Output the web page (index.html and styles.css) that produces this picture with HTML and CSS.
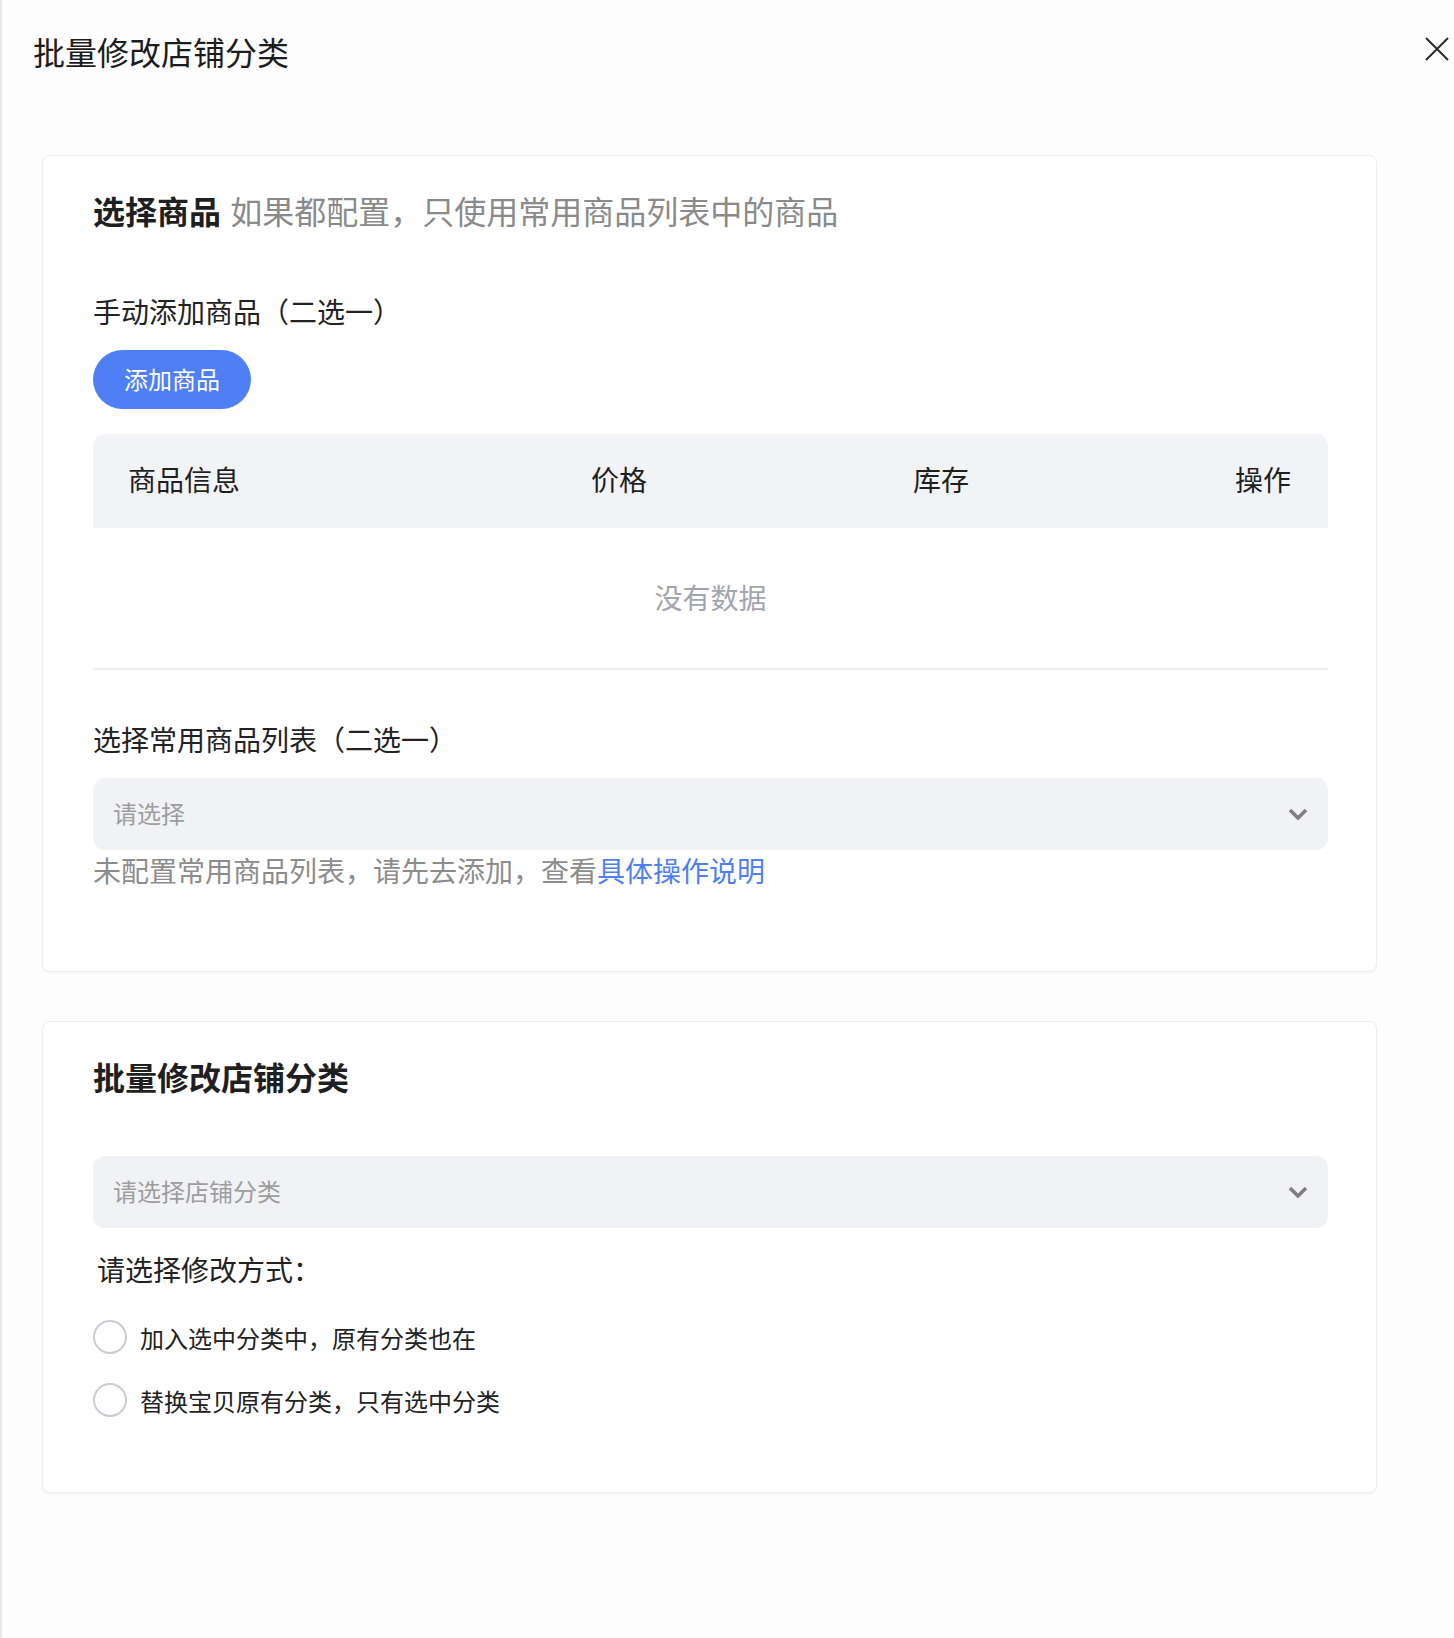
FILE: index.html
```html
<!DOCTYPE html>
<html lang="zh-CN">
<head>
  <meta charset="UTF-8" />
  <meta name="viewport" content="width=device-width, initial-scale=1.0"/>
  <title>批量修改店铺分类</title>
  <link rel="stylesheet" href="styles.css">
</head>
<body>

  <div class="drawer">
    <div class="drawer-header">
      <h1 class="drawer-title">批量修改店铺分类</h1>
      <button class="close-btn" aria-label="关闭">
        <svg width="24" height="24" viewBox="0 0 24 24">
          <path d="M1 1 L23 23 M23 1 L1 23" stroke="#2b2b2b" stroke-width="2" fill="none"/>
        </svg>
      </button>
    </div>

    <!-- 选择商品 -->
    <div class="card card-goods">
      <div class="card-title">
        选择商品 <span class="card-sub">如果都配置，只使用常用商品列表中的商品</span>
      </div>

      <div class="label label-manual">手动添加商品（二选一）</div>
      <button class="btn-primary">添加商品</button>

      <div class="table">
        <div class="table-head">
          <span>商品信息</span>
          <span>价格</span>
          <span>库存</span>
          <span class="col-op">操作</span>
        </div>
        <div class="table-empty">没有数据</div>
      </div>

      <div class="label label-list">选择常用商品列表（二选一）</div>
      <div class="select select-list">
        <span class="placeholder">请选择</span>
        <svg class="chevron" width="20" height="12" viewBox="0 0 20 12">
          <path d="M2 2 L10 10 L18 2" stroke="#808080" stroke-width="3.6" fill="none"/>
        </svg>
      </div>
      <div class="hint">未配置常用商品列表，请先去添加，查看<a href="#" class="link">具体操作说明</a></div>
    </div>

    <!-- 批量修改店铺分类 -->
    <div class="card card-category">
      <div class="card-title">批量修改店铺分类</div>

      <div class="select select-category">
        <span class="placeholder">请选择店铺分类</span>
        <svg class="chevron" width="20" height="12" viewBox="0 0 20 12">
          <path d="M2 2 L10 10 L18 2" stroke="#808080" stroke-width="3.6" fill="none"/>
        </svg>
      </div>

      <div class="label label-mode">请选择修改方式：</div>
      <label class="radio radio-first">
        <span class="radio-circle"></span>
        <span>加入选中分类中，原有分类也在</span>
      </label>
      <label class="radio">
        <span class="radio-circle"></span>
        <span>替换宝贝原有分类，只有选中分类</span>
      </label>
    </div>
  </div>

</body>
</html>
```

FILE: styles.css
```css
body {
  margin: 0;
  padding: 0;
  font-family: "Noto Sans CJK SC", "Noto Sans", sans-serif;
  color: #222;
  background: #fdfdfd;
}

.drawer {
  width: 1452px;
  min-height: 1638px;
  border-left: 2px solid #e6e8ee;
  background: #fdfdfd;
  box-sizing: border-box;
}

.drawer-header {
  height: 104px;
  display: flex;
  align-items: center;
  justify-content: space-between;
  padding: 0 3px 0 31px;
}

.drawer-title {
  margin: 0 0 2px;
  font-size: 32px;
  font-weight: 400;
  line-height: 44px;
  color: #1c1c1c;
}

.close-btn {
  border: none;
  background: none;
  padding: 0;
  width: 24px;
  height: 24px;
  margin-top: -6px;
  cursor: pointer;
}

.close-btn svg {
  display: block;
}

/* cards */
.card {
  width: 1335px;
  margin-left: 40px;
  box-sizing: border-box;
  background: #fff;
  border: 1px solid #ededed;
  border-radius: 8px;
  box-shadow: 0 2px 2px rgba(0, 0, 0, 0.03);
  padding: 32px 48px 0 50px;
}

.card-goods {
  margin-top: 51px;
  padding-bottom: 81px;
}

.card-category {
  margin-top: 49px;
  padding-bottom: 72px;
}

.card-title {
  font-size: 32px;
  line-height: 44px;
  font-weight: 700;
  color: #1f1f1f;
}

.card-sub {
  font-weight: 400;
  color: #8a8a8a;
  margin-left: 2px;
}

.label {
  font-size: 28px;
  line-height: 40px;
  color: #222;
}

.label-manual {
  margin-top: 59px;
}

.label-list {
  margin-top: 49px;
}

.label-mode {
  margin-top: 21px;
  padding-left: 4px;
}

.btn-primary {
  display: block;
  margin-top: 19px;
  height: 59px;
  padding: 0 31px 2px;
  border: none;
  border-radius: 30px;
  background: #4f7ff5;
  color: #fff;
  font-family: inherit;
  font-size: 24px;
  cursor: pointer;
}

/* table */
.table {
  margin-top: 25px;
}

.table-head {
  display: grid;
  grid-template-columns: 463px 322px 322px 1fr;
  align-items: center;
  height: 94px;
  box-sizing: border-box;
  padding: 0 37px 4px 35px;
  background: #f2f3f7;
  border-radius: 12px 12px 0 0;
  font-size: 28px;
  color: #1f1f1f;
}

.col-op {
  text-align: right;
}

.table-empty {
  height: 142px;
  box-sizing: border-box;
  padding-bottom: 3px;
  display: flex;
  align-items: center;
  justify-content: center;
  border-bottom: 2px solid #eeeff3;
  font-size: 28px;
  color: #a3a5ad;
}

/* select */
.select {
  height: 72px;
  display: flex;
  align-items: center;
  justify-content: space-between;
  padding: 0 20px;
  background: #f1f2f6;
  border-radius: 12px;
}

.select-list {
  margin-top: 19px;
}

.select-category {
  margin-top: 58px;
}

.placeholder {
  font-size: 24px;
  color: #9d9d9d;
  margin-top: -3px;
}

.chevron {
  display: block;
}

.hint {
  margin-top: 0;
  font-size: 28px;
  line-height: 40px;
  color: #8c8c8c;
}

.link {
  color: #4f7ff5;
  text-decoration: none;
}

/* radios */
.radio {
  display: flex;
  align-items: center;
  gap: 13px;
  height: 40px;
  margin-top: 23px;
  font-size: 24px;
  color: #222;
  cursor: pointer;
}

.radio-first {
  margin-top: 28px;
}

.radio-circle {
  width: 34px;
  height: 34px;
  box-sizing: border-box;
  border: 2px solid #c9ccd4;
  border-radius: 50%;
  background: #fff;
}
```
